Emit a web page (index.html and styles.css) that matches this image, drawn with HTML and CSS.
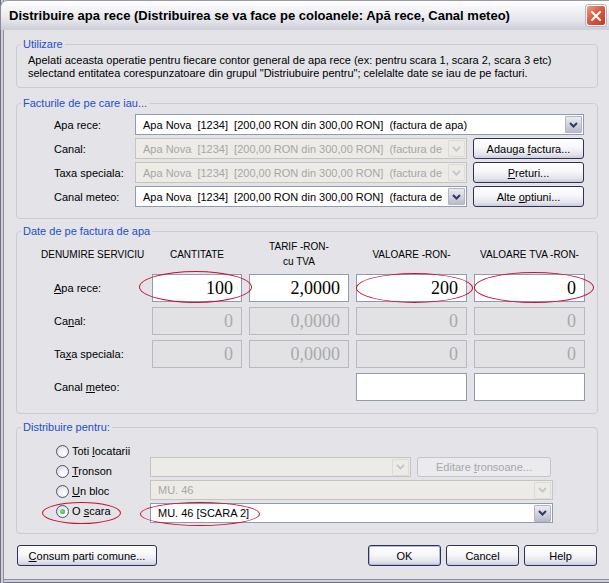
FILE: index.html
```html
<!DOCTYPE html>
<html>
<head>
<meta charset="utf-8">
<link rel="stylesheet" href="styles.css">
</head>
<body>
<div class="window">
  <div class="titlebar">
    <span class="title">Distribuire apa rece (Distribuirea se va face pe coloanele: Apă rece, Canal meteo)</span>
    <span class="close"><svg width="10" height="10" viewBox="0 0 10 10"><path d="M1 1 L9 9 M9 1 L1 9" stroke="#fff" stroke-width="2" stroke-linecap="square"/></svg></span>
  </div>
  <div class="client">
    <div class="group g-util">
      <div class="legend">Utilizare</div>
      <p class="info">Apelati aceasta operatie pentru fiecare contor general de apa rece (ex: pentru scara 1, scara 2, scara 3 etc)<br>selectand entitatea corespunzatoare din grupul "Distriubuire pentru"; celelalte date se iau de pe facturi.</p>
    </div>

    <div class="group g-fact">
      <div class="legend">Facturile de pe care iau...</div>
      <div class="fact-grid">
        <span class="lbl">Apa rece:</span>
        <div class="combo wide"><span class="ctext">Apa Nova  [1234]  [200,00 RON din 300,00 RON]  (factura de apa)</span><span class="drop"><svg width="9" height="6" viewBox="0 0 9 6"><path d="M1 1 L4.5 4.5 L8 1" fill="none" stroke="currentColor" stroke-width="2"/></svg></span></div>

        <span class="lbl">Canal:</span>
        <div class="combo disabled"><span class="ctext">Apa Nova  [1234]  [200,00 RON din 300,00 RON]  (factura de</span><span class="drop"><svg width="9" height="6" viewBox="0 0 9 6"><path d="M1 1 L4.5 4.5 L8 1" fill="none" stroke="currentColor" stroke-width="2"/></svg></span></div>
        <span class="btn side"><span>Adauga <u>f</u>actura...</span></span>

        <span class="lbl">Taxa speciala:</span>
        <div class="combo disabled"><span class="ctext">Apa Nova  [1234]  [200,00 RON din 300,00 RON]  (factura de</span><span class="drop"><svg width="9" height="6" viewBox="0 0 9 6"><path d="M1 1 L4.5 4.5 L8 1" fill="none" stroke="currentColor" stroke-width="2"/></svg></span></div>
        <span class="btn side"><span><u>P</u>returi...</span></span>

        <span class="lbl">Canal meteo:</span>
        <div class="combo"><span class="ctext">Apa Nova  [1234]  [200,00 RON din 300,00 RON]  (factura de</span><span class="drop"><svg width="9" height="6" viewBox="0 0 9 6"><path d="M1 1 L4.5 4.5 L8 1" fill="none" stroke="currentColor" stroke-width="2"/></svg></span></div>
        <span class="btn side"><span>Alte <u>o</u>ptiuni...</span></span>
      </div>
    </div>

    <div class="group g-date">
      <div class="legend">Date de pe factura de apa</div>
      <div class="date-grid">
        <span class="hdr first">DENUMIRE SERVICIU</span>
        <span class="hdr">CANTITATE</span>
        <span class="hdr">TARIF -RON-<br>cu TVA</span>
        <span class="hdr">VALOARE -RON-</span>
        <span class="hdr">VALOARE TVA -RON-</span>

        <span class="lbl2"><u>A</u>pa rece:</span>
        <span class="num">100</span>
        <span class="num">2,0000</span>
        <span class="num">200</span>
        <span class="num">0</span>

        <span class="lbl2">Ca<u>n</u>al:</span>
        <span class="num dis">0</span>
        <span class="num dis">0,0000</span>
        <span class="num dis">0</span>
        <span class="num dis">0</span>

        <span class="lbl2">Ta<u>x</u>a speciala:</span>
        <span class="num dis">0</span>
        <span class="num dis">0,0000</span>
        <span class="num dis">0</span>
        <span class="num dis">0</span>

        <span class="lbl2">Canal <u>m</u>eteo:</span>
        <span></span>
        <span></span>
        <span class="num"></span>
        <span class="num"></span>
      </div>
    </div>

    <div class="group g-dist">
      <div class="legend">Distribuire pentru:</div>
      <div class="dist-body">
        <div class="radios">
          <div class="radio-row"><span class="radio"></span><span>Toti <u>l</u>ocatarii</span></div>
          <div class="radio-row"><span class="radio"></span><span><u>T</u>ronson</span></div>
          <div class="radio-row"><span class="radio"></span><span><u>U</u>n bloc</span></div>
          <div class="radio-row"><span class="radio checked"></span><span>O <u>s</u>cara</span></div>
        </div>
        <div class="dist-combos">
          <div class="dist-row">
            <div class="combo disabled tronson"><span class="ctext"></span><span class="drop"><svg width="9" height="6" viewBox="0 0 9 6"><path d="M1 1 L4.5 4.5 L8 1" fill="none" stroke="currentColor" stroke-width="2"/></svg></span></div>
            <span class="btn disabled edit"><span>Editare <u>t</u>ronsoane...</span></span>
          </div>
          <div class="combo disabled dcombo"><span class="ctext">MU. 46</span><span class="drop"><svg width="9" height="6" viewBox="0 0 9 6"><path d="M1 1 L4.5 4.5 L8 1" fill="none" stroke="currentColor" stroke-width="2"/></svg></span></div>
          <div class="combo dcombo"><span class="ctext">MU. 46 [SCARA 2]</span><span class="drop"><svg width="9" height="6" viewBox="0 0 9 6"><path d="M1 1 L4.5 4.5 L8 1" fill="none" stroke="currentColor" stroke-width="2"/></svg></span></div>
        </div>
      </div>
    </div>

    <div class="footer">
      <span class="btn consum"><span><u>C</u>onsum parti comune...</span></span>
      <div class="footer-right">
        <span class="btn fbtn default">OK</span>
        <span class="btn fbtn">Cancel</span>
        <span class="btn fbtn">Help</span>
      </div>
    </div>
  </div>

  <span class="ellipse e1"></span>
  <span class="ellipse e2"></span>
  <span class="ellipse e3"></span>
  <span class="ellipse e4"></span>
  <span class="ellipse e5"></span>
</div>
</body>
</html>
```

FILE: styles.css
```css
* { box-sizing: border-box; }
html, body { margin: 0; padding: 0; }
body {
  width: 609px;
  height: 583px;
  overflow: hidden;
  background: #e3e3e8;
  font-family: "Liberation Sans", Arial, sans-serif;
  font-size: 11px;
  color: #000;
}
u { text-decoration: underline; text-underline-offset: 1px; }

.window {
  position: relative;
  width: 609px;
  height: 583px;
  padding-left: 4px;
  background: #e3e3e8;
  display: flex;
  flex-direction: column;
  box-shadow: inset 1px 0 #6f6f80, inset 3px 0 #cfcfd8, inset 4px 0 #8e8e9e,
              inset 0 -1px #6f6f80, inset 0 -3px #cfcfd8, inset 0 -4px #8e8e9e;
}

.titlebar {
  height: 30px;
  margin-left: -4px;
  padding-left: 8px;
  padding-right: 3px;
  display: flex;
  align-items: center;
  justify-content: space-between;
  background: linear-gradient(#ffffff 0%, #f3f3f7 30%, #e2e2e9 70%, #cdcdd8 100%);
  border-top: 1px solid #9a9aa8;
  border-left: 1px solid #8a8a9a;
  border-top-left-radius: 7px;
}
.title {
  font-weight: bold;
  font-size: 13px;
  color: #000;
  white-space: nowrap;
}
.close {
  width: 20px;
  height: 21px;
  border: 1px solid #ffffff;
  border-radius: 3px;
  background: linear-gradient(135deg, #f29a84 0%, #dd5b43 45%, #c23b27 100%);
  box-shadow: 0 0 0 1px #b8b8c4;
  display: flex;
  align-items: center;
  justify-content: center;
}

.client {
  padding: 8px 11px 0 12px;
}

.group {
  border: 1px solid #cbcbd3;
  border-radius: 4px;
  margin-top: 6px;
}
.legend {
  display: table;
  margin: -7px 0 0 4px;
  padding: 0 2px;
  line-height: 12px;
  background: #e3e3e8;
  color: #1f4fc9;
}

.g-util { height: 44px; }
.info {
  margin: 4px 0 0 11px;
  line-height: 13px;
}

.g-fact { height: 116px; margin-top: 15px; }
.fact-grid {
  margin-top: 5px;
  padding-left: 37px;
  display: grid;
  grid-template-columns: 81px 332px 117px;
  grid-auto-rows: 21px;
  row-gap: 3px;
  align-items: center;
}
.lbl { align-self: center; }
.combo {
  height: 21px;
  display: flex;
  align-items: center;
  border: 1px solid #8f9bb3;
  background: #fff;
  padding: 0 1px 0 7px;
  overflow: hidden;
}
.combo.wide { grid-column: 2 / 4; }
.ctext {
  flex: 1;
  white-space: pre;
  overflow: hidden;
}
.drop {
  width: 17px;
  height: 17px;
  flex: none;
  display: flex;
  align-items: center;
  justify-content: center;
  border: 1px solid #b4b4c6;
  border-radius: 1px;
  background: linear-gradient(#ecebf2, #cfcfdb 60%, #babaca);
  color: #2c3a64;
}
.combo.disabled {
  background: #ecebe8;
  border-color: #c6c5bd;
  color: #a8a7a4;
}
.combo.disabled .drop {
  background: #ecebe8;
  border-color: #dcdbd6;
  color: #c8c8cc;
}

.btn {
  height: 21px;
  display: flex;
  align-items: center;
  justify-content: center;
  border: 1px solid #2f3156;
  border-radius: 3px;
  background: linear-gradient(#ffffff 0%, #f7f7fa 45%, #e4e4ec 80%, #cdcdd9 100%);
  white-space: nowrap;
}
.btn.side { width: 111px; justify-self: end; }
.btn.disabled {
  border-color: #c5c5cd;
  background: #ebebee;
  color: #a6a6ae;
}

.g-date { height: 183px; margin-top: 12px; }
.date-grid {
  margin-top: 2px;
  padding-left: 24px;
  display: grid;
  grid-template-columns: 104px 90px 100px 111px 111px;
  grid-template-rows: 30px repeat(4, 28px);
  column-gap: 7px;
  row-gap: 5px;
  align-items: center;
}
.hdr {
  text-align: center;
  line-height: 15px;
  font-size: 10px;
  white-space: nowrap;
}
.hdr.first { text-align: left; }
.lbl2 { padding-left: 13px; }
.num {
  height: 28px;
  border: 1px solid #8f9bb3;
  background: #fff;
  font-family: "Liberation Serif", "Times New Roman", serif;
  font-size: 18px;
  text-align: right;
  padding-right: 8px;
  line-height: 26px;
}
.num.dis {
  background: #e2e2e5;
  border-color: #b9b9c2;
  color: #a9a9ad;
}

.g-dist { height: 107px; margin-top: 13px; }
.dist-body {
  display: flex;
  align-items: flex-start;
}
.radios {
  width: 133px;
  padding-left: 39px;
  margin-top: 8px;
  display: flex;
  flex-direction: column;
}
.radio-row {
  height: 20px;
  display: flex;
  align-items: center;
  gap: 3px;
}
.radio {
  width: 13px;
  height: 13px;
  border-radius: 50%;
  border: 1px solid #4f5472;
  background: radial-gradient(circle at 60% 65%, #ffffff 0%, #f2f2f6 40%, #c9c9d6 100%);
  display: flex;
  align-items: center;
  justify-content: center;
}
.radio.checked::after {
  content: "";
  width: 5px;
  height: 5px;
  border-radius: 50%;
  background: radial-gradient(circle at 40% 40%, #8ee08e, #21a121);
}
.dist-combos {
  margin-top: 24px;
  width: 403px;
  display: flex;
  flex-direction: column;
  gap: 3px;
}
.dist-row { display: flex; gap: 6px; }
.dist-combos .combo { height: 20px; }
.combo.tronson { width: 261px; }
.btn.edit { width: 134px; height: 20px; }

.footer {
  margin-top: 11px;
  display: flex;
  justify-content: space-between;
  padding: 0 1px;
}
.btn.consum { width: 140px; }
.footer-right { display: flex; gap: 5px; }
.btn.fbtn { width: 73px; }
.btn.default { box-shadow: inset 0 0 0 1px #a9bde8; }

.ellipse {
  position: absolute;
  border: 1px solid #c8102e;
  border-radius: 50%;
}
.e1 { left: 139px; top: 271px; width: 113px; height: 32px; }
.e2 { left: 356px; top: 273px; width: 117px; height: 30px; }
.e3 { left: 474px; top: 272px; width: 120px; height: 31px; }
.e4 { left: 42px; top: 502px; width: 79px; height: 22px; }
.e5 { left: 140px; top: 502px; width: 120px; height: 24px; }
```
